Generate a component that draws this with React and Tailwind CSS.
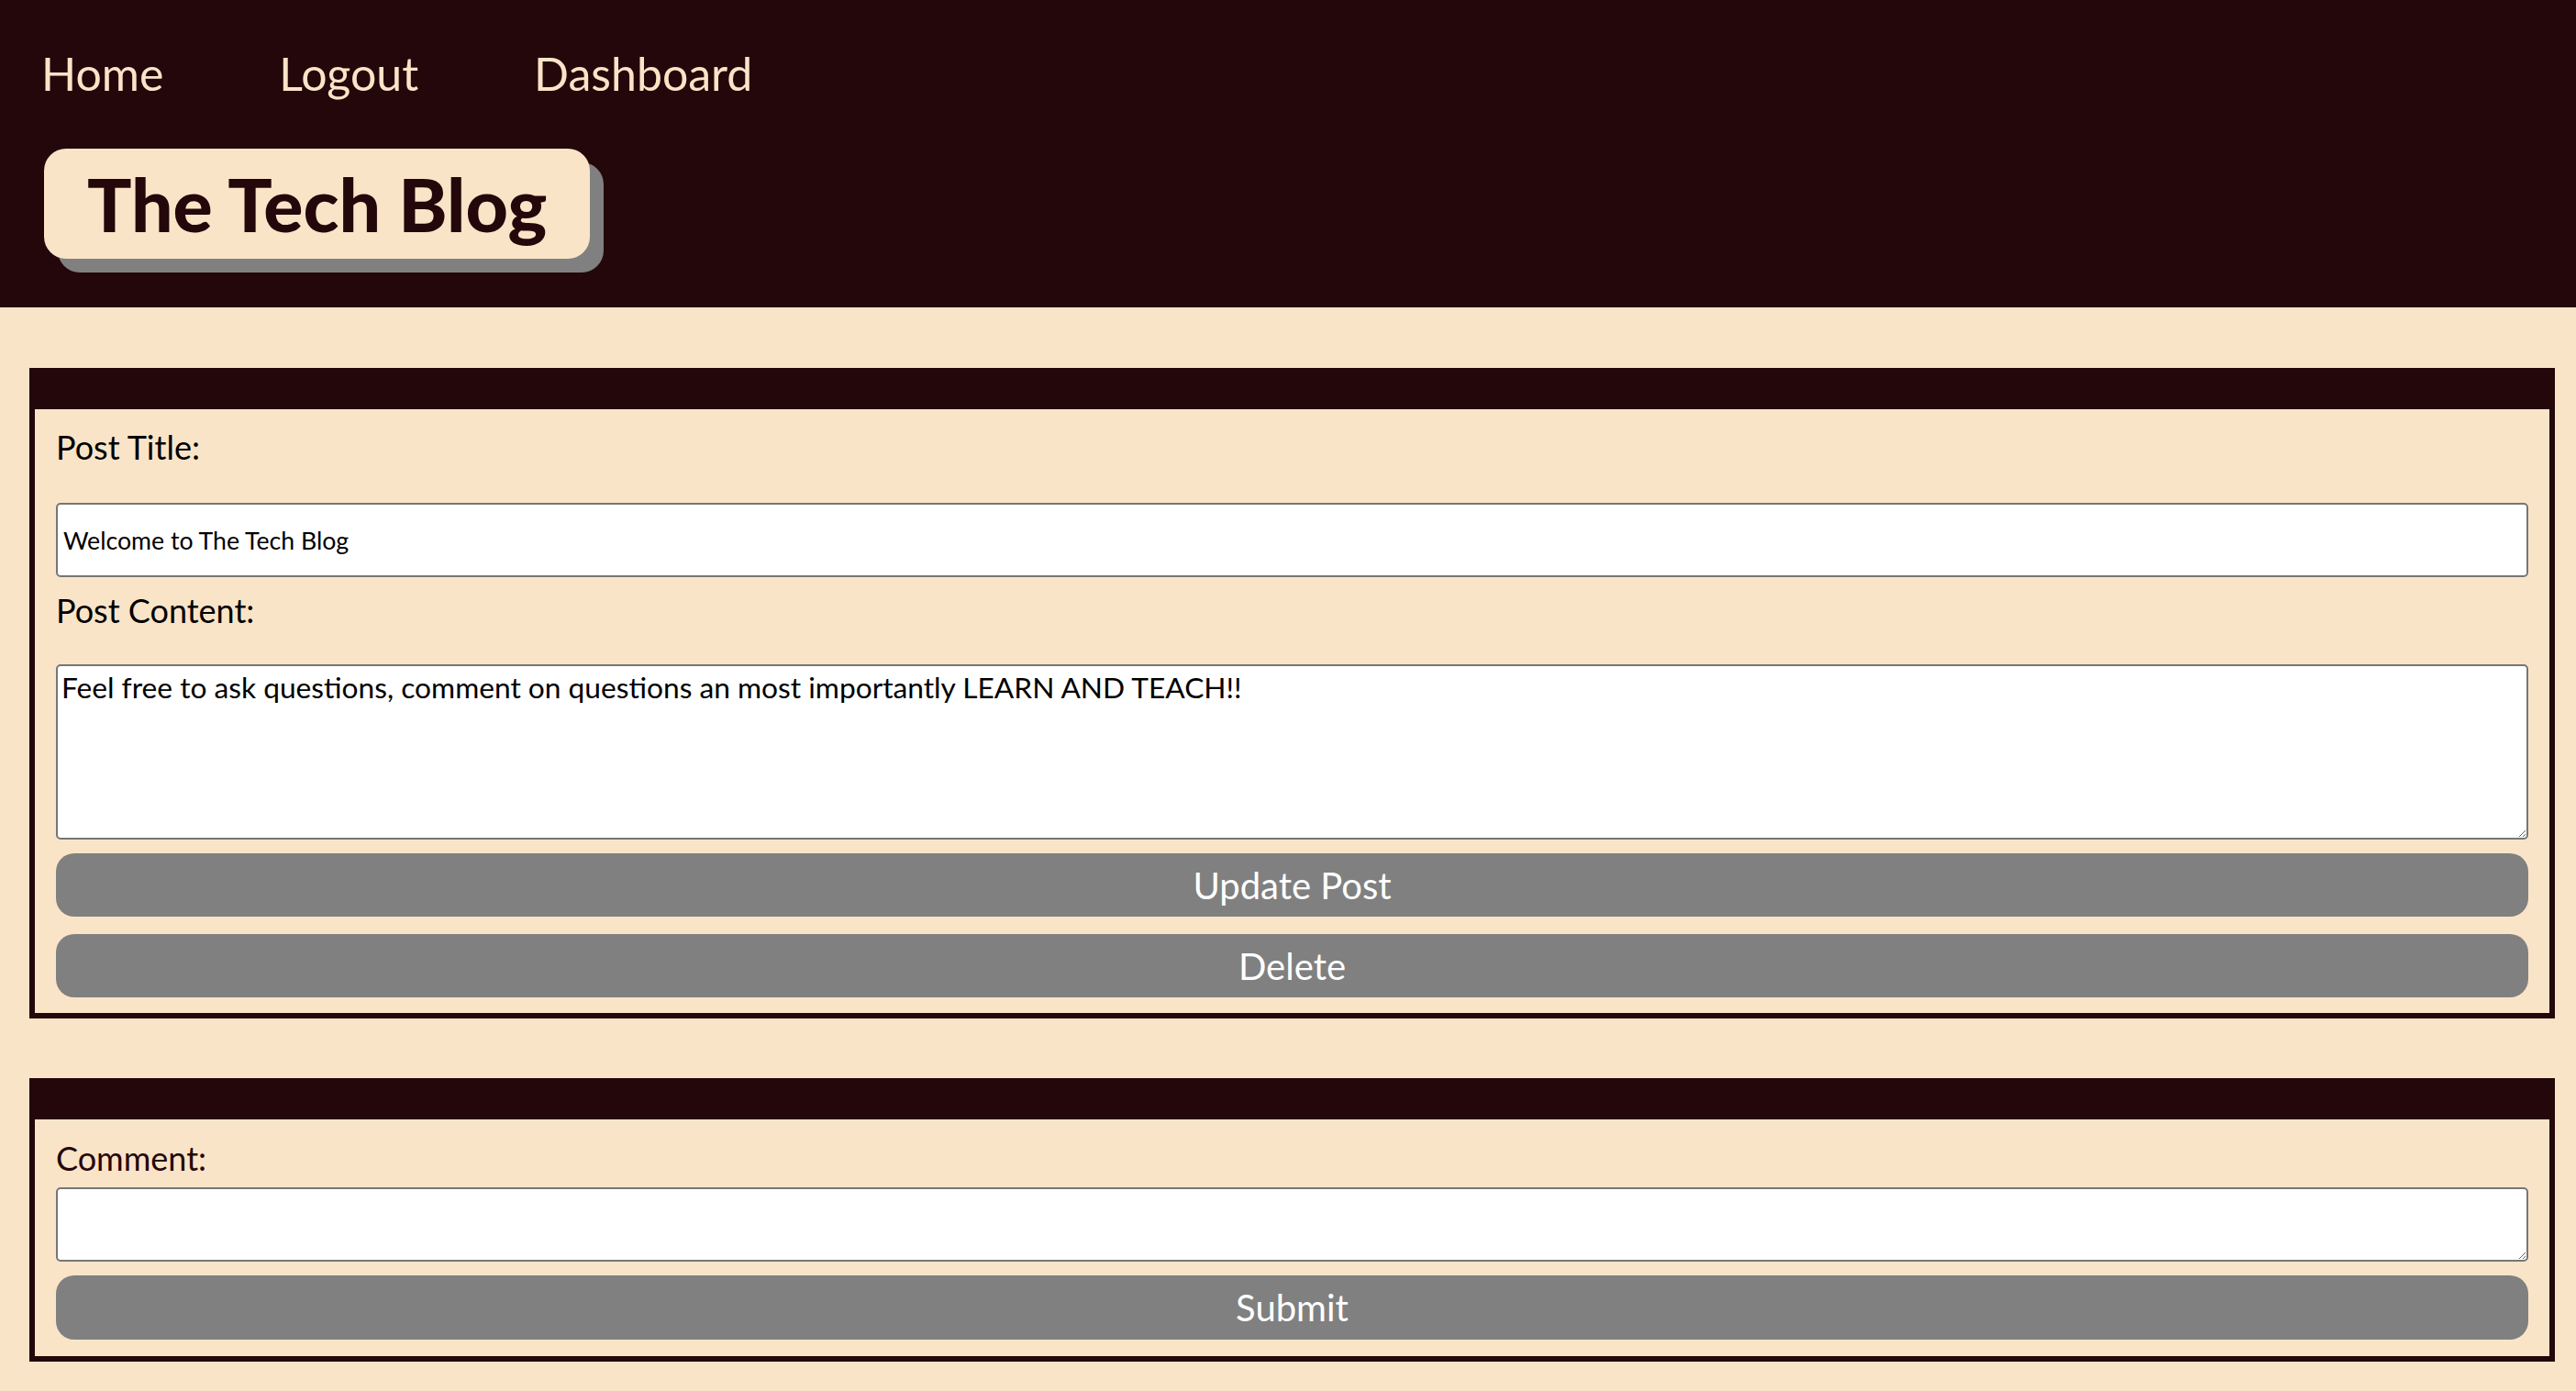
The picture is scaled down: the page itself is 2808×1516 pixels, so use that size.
import { useState } from 'react';

function Card({ children }) {
  return (
    <div className="border-[6px] border-[#24070a]">
      <div className="h-[39px] bg-[#24070a]"></div>
      <div className="px-[23px]">{children}</div>
    </div>
  );
}

export default function App() {
  const [title, setTitle] = useState('Welcome to The Tech Blog');
  const [content, setContent] = useState(
    'Feel free to ask questions, comment on questions an most importantly LEARN AND TEACH!!'
  );
  const [comment, setComment] = useState('');

  return (
    <div className="min-h-screen bg-[#fae4c8] font-['Lato',sans-serif]">
      {/* Header */}
      <header className="h-[335px] bg-[#24070a] pt-[50px]">
        <nav className="flex gap-[126px] pl-[45px] text-[50px] leading-[60px] text-[#fae4c8]">
          <a href="#">Home</a>
          <a href="#">Logout</a>
          <a href="#">Dashboard</a>
        </nav>
        <div className="ml-[48px] mt-[52px] inline-flex h-[120px] items-center rounded-[24px] bg-[#fae4c8] px-[47px] shadow-[15px_15px_0_0_#808080]">
          <h1 className="text-[80.5px] font-black leading-none text-[#24070a]">The Tech Blog</h1>
        </div>
      </header>

      <main className="pl-[32px] pr-[23px] pt-[66px] pb-[32px]">
        {/* Edit post */}
        <Card>
          <form onSubmit={(e) => e.preventDefault()} className="flex flex-col pt-[19px] pb-[17px]">
            <label className="block text-[36px] leading-[44px] text-black">Post Title:</label>
            <input
              type="text"
              value={title}
              onChange={(e) => setTitle(e.target.value)}
              className="mt-[39px] h-[81px] w-full rounded-[5px] border-2 border-[#767676] bg-white px-[6px] text-[26.67px] text-black"
            />
            <label className="mt-[14px] block text-[36px] leading-[44px] text-black">Post Content:</label>
            <textarea
              value={content}
              onChange={(e) => setContent(e.target.value)}
              className="mt-[37px] h-[191px] w-full rounded-[5px] border-2 border-[#767676] bg-white p-[4px] text-[31.7px] leading-[38px] text-black"
            />
            <button type="submit" className="mt-[15px] h-[69px] w-full rounded-[20px] bg-[#808080] text-[40px] text-white">
              Update Post
            </button>
            <button type="button" className="mt-[19px] h-[69px] w-full rounded-[20px] bg-[#808080] text-[40px] text-white">
              Delete
            </button>
          </form>
        </Card>

        {/* Comment */}
        <div className="mt-[65px]">
          <Card>
            <form onSubmit={(e) => e.preventDefault()} className="flex flex-col pt-[20px] pb-[18px]">
              <label className="block text-[36px] leading-[44px] text-[#24070a]">Comment:</label>
              <textarea
                value={comment}
                onChange={(e) => setComment(e.target.value)}
                className="mt-[10px] h-[81px] w-full rounded-[5px] border-2 border-[#767676] bg-white p-[4px] text-[32px] text-black"
              />
              <button type="submit" className="mt-[15px] h-[70px] w-full rounded-[20px] bg-[#808080] text-[40px] text-white">
                Submit
              </button>
            </form>
          </Card>
        </div>
      </main>
    </div>
  );
}
